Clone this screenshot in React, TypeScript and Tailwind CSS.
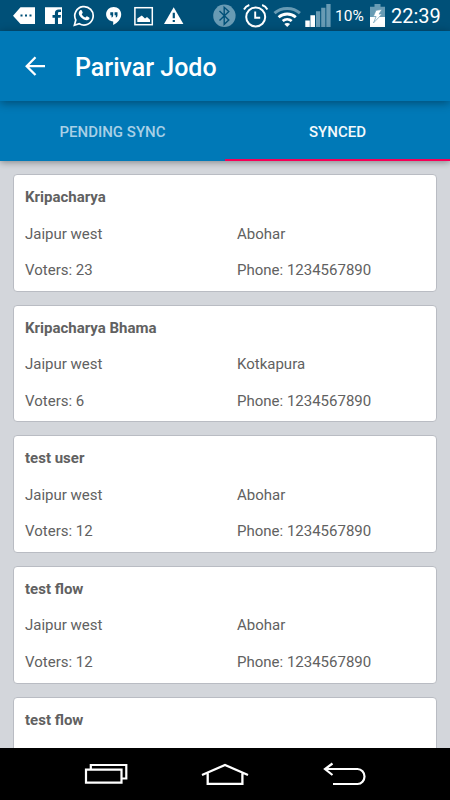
import type { ReactNode } from 'react';

interface Family {
  name: string;
  details?: {
    constituency: string;
    town: string;
    voters: number;
    phone: string;
  };
}

const families: Family[] = [
  { name: 'Kripacharya', details: { constituency: 'Jaipur west', town: 'Abohar', voters: 23, phone: '1234567890' } },
  { name: 'Kripacharya Bhama', details: { constituency: 'Jaipur west', town: 'Kotkapura', voters: 6, phone: '1234567890' } },
  { name: 'test user', details: { constituency: 'Jaipur west', town: 'Abohar', voters: 12, phone: '1234567890' } },
  { name: 'test flow', details: { constituency: 'Jaipur west', town: 'Abohar', voters: 12, phone: '1234567890' } },
  { name: 'test flow' },
];

function Icon({ w, h, className = '', children }: { w: number; h: number; className?: string; children: ReactNode }) {
  return (
    <svg width={w} height={h} viewBox={`0 0 ${w} ${h}`} fill="none" className={`shrink-0 ${className}`}>
      {children}
    </svg>
  );
}

function StatusBar() {
  return (
    <div className="flex h-[31px] shrink-0 items-start bg-[#005078] text-white">
      <Icon w={22} h={31} className="ml-[13px]">
        <path d="M0 15.7 7.5 7.3H22V24H7.5Z" fill="#fff" />
        <path d="M7.500 14.500h2v2h-2zM12 14.500h2v2h-2zM16.500 14.500h2v2h-2z" fill="#005078" />
      </Icon>
      <Icon w={18} h={31} className="ml-[10px]">
        <path d="M0 7.300h17V24h-4v-6.200h2.600l.4-2.700h-3v-1.600c0-1 .5-1.400 1.500-1.400H16V9.500h-2.200c-2.600 0-3.900 1.300-3.900 3.700v1.900H7.500v2.700h2.400V24H0Z" fill="#fff" />
      </Icon>
      <Icon w={22} h={31} className="ml-[10px]">
        <path d="M1.4 25.2 2.8 20a9.2 9.2 0 1 1 3.5 3.7Z" stroke="#fff" strokeWidth="1.7" />
        <path d="M7.200 10.300c.7-.5 1.300-.4 1.600.2l.9 2.100c.2.5-.8 1.300-1 1.700.8 1.600 2 2.600 3.700 3.300.5-.2 1-1.400 1.600-1.300l2.200 1.100c.7.3.2 1.700-.4 2.200-1.300 1.200-3.400.7-5.400-.4-1.900-1-3.500-2.700-4.300-4.400-.7-1.600-.2-3.500 1.100-4.500Z" fill="#fff" />
      </Icon>
      <Icon w={16} h={31} className="ml-[11px]">
        <path d="M7.700 7C3.400 7 .1 10.200.1 14.300c0 4 3.200 7.100 7.100 7.200V25c4.800-2.200 8-6.300 8-10.700C15.200 10.200 12 7 7.700 7Z" fill="#fff" />
        <path d="M4.300 12.300h2.900v2.700c0 1.300-.6 2.200-1.700 2.600v-2.400H4.300zM8.600 12.300h2.900v2.700c0 1.300-.6 2.200-1.700 2.600v-2.400H8.600z" fill="#005078" />
      </Icon>
      <Icon w={20} h={31} className="ml-[12px]">
        <rect x="0.900" y="7.700" width="17.400" height="17" stroke="#fff" strokeWidth="1.500" />
        <path d="M3.300 22v-3.400l4.500-3 3.200 3 2-1.500 3 2.600V22Z" fill="#fff" />
      </Icon>
      <Icon w={20} h={31} className="ml-[10px]">
        <path d="M9.700 7.300 19.400 24H0Z" fill="#fff" />
        <path d="M8.700 12.700h2.200v5.600H8.700zM8.700 20h2.200v2.100H8.700z" fill="#005078" />
      </Icon>

      <Icon w={23} h={31} className="ml-[29px]">
        <circle cx="11.400" cy="15.800" r="11.200" fill="#689bb4" />
        <path d="m6.500 11 9.300 9-4.600 4.300V7.300l4.600 4.300-9.300 9" stroke="#005078" strokeWidth="1.400" />
      </Icon>
      <Icon w={26} h={31} className="ml-[7px]">
        <circle cx="12.700" cy="17" r="9.500" stroke="#fff" strokeWidth="2" />
        <path d="M12.200 11.400v6.400h5M1 9.500C2 7.500 4 5.800 6.300 5M24.400 9.500c-1-2-3-3.700-5.300-4.500" stroke="#fff" strokeWidth="1.900" />
      </Icon>
      <Icon w={28} h={31} className="ml-[4px]">
        <path d="M1.500 13.200c6.800-6.300 18.600-6.300 25.400 0" stroke="#689bb4" strokeWidth="3" />
        <path d="M5.600 17.200c4.800-4.300 12.400-4.300 17.200 0M9.700 21c2.600-2.200 6.400-2.200 9 0" stroke="#fff" strokeWidth="2.800" />
        <path d="m11.300 24 2.900 3 2.900-3c-1.600-1.300-4.200-1.300-5.800 0Z" fill="#fff" />
      </Icon>
      <Icon w={26} h={31} className="ml-[4px]">
        <path d="M.3 20.500h4.500V27H.3zM5.400 15.300H10V27H5.400z" fill="#fff" />
        <path d="M11 11.300h4.200V27H11zM16.200 7.700h4.200V27h-4.200zM21.300 4h4.300v23h-4.300z" fill="#689bb4" />
      </Icon>
      <span className="ml-[4px] w-[31px] text-[15.500px] leading-[32px]">10%</span>
      <Icon w={16} h={31} className="ml-[4px]">
        <path d="M4.500 4h6v2.700H15V27H0V6.700h4.500z" fill="#689bb4" />
        <path d="M0 17h15v10H0z" fill="#fff" />
        <path d="m6 10.300 6-.8-3 4.600h3L3.500 22.900l2.600-6.300H3.300Z" fill="#fff" stroke="#689bb4" strokeWidth="0.700" />
      </Icon>
      <span className="ml-[5px] text-[20px] leading-[33px]">22:39</span>
    </div>
  );
}

function AppBar() {
  return (
    <header className="relative z-20 flex h-[70px] shrink-0 items-center bg-[#0079b7] text-white shadow-[0_2px_9px_rgba(0,0,0,0.38)]">
      <Icon w={22} h={22} className="ml-[25px] mt-[2px]">
        <path d="M10.500 1.300 1.700 10.200l8.800 8.800M2 10.200h18" stroke="#fff" strokeWidth="2.300" />
      </Icon>
      <h1 className="ml-[28px] pt-[4px] text-[25px] font-medium leading-8">Parivar Jodo</h1>
    </header>
  );
}

function Tabs() {
  return (
    <nav className="relative z-10 grid h-[60px] shrink-0 grid-cols-2 bg-[#0079b7] text-center text-[15px] font-medium shadow-[0_1px_7px_rgba(0,0,0,0.4)]">
      <div className="pt-[20px] leading-[22px] text-[#a8d0e6]">PENDING SYNC</div>
      <div className="border-b-2 border-[#f50057] pt-[20px] leading-[22px] text-[#f4f9fc]">SYNCED</div>
    </nav>
  );
}

function FamilyCard({ family }: { family: Family }) {
  const { name, details } = family;
  return (
    <div className="h-[117.600px] shrink-0 rounded-[4px] border border-[#b9bcc3] bg-white px-[11px] pt-[4px] text-[15px] text-[#616161]">
      <div className="h-[36.500px] font-bold leading-[37px]">{name}</div>
      {details && (
        <div className="grid grid-cols-2 leading-[36.500px]">
          <div>{details.constituency}</div>
          <div className="pl-[12px]">{details.town}</div>
          <div>Voters: {details.voters}</div>
          <div className="pl-[12px]">Phone: {details.phone}</div>
        </div>
      )}
    </div>
  );
}

function NavBar() {
  return (
    <div className="flex h-[52px] shrink-0 items-start bg-black">
      <Icon w={44} h={52} className="ml-[84px]">
        <path d="M2 21.600h35.500v13H2zM6.800 21V17h35.500v13.500H38" stroke="#fff" strokeWidth="2.200" />
      </Icon>
      <Icon w={50} h={52} className="ml-[72px]">
        <path d="M2 27 25 17l23 10M7.700 25.500v10.300h34.700V25.500" stroke="#fff" strokeWidth="2.300" />
      </Icon>
      <Icon w={44} h={52} className="ml-[72px]">
        <path d="M10.500 15.500 3 21l7.500 6M3 21h32.500c4 0 7 3.500 7 7.500s-3 7.500-7 7.500H11" stroke="#fff" strokeWidth="2.200" />
      </Icon>
    </div>
  );
}

export default function App() {
  return (
    <div className="flex h-[800px] w-[450px] flex-col overflow-hidden bg-[#d3d6db] font-[Roboto,sans-serif]">
      <StatusBar />
      <AppBar />
      <Tabs />
      <main className="flex min-h-0 flex-1 flex-col gap-[13px] overflow-hidden px-[13px] pt-[13.200px]">
        {families.map((family, i) => (
          <FamilyCard key={i} family={family} />
        ))}
      </main>
      <NavBar />
    </div>
  );
}
